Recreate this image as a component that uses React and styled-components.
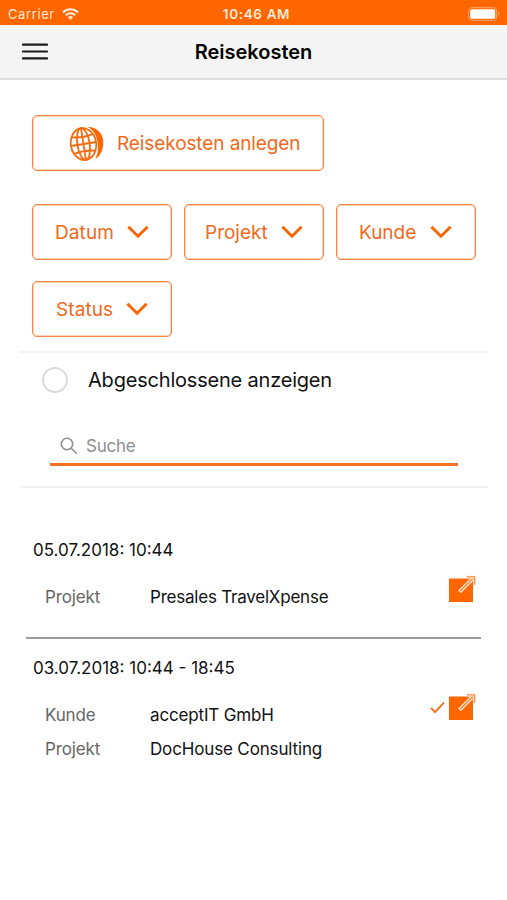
import React from "react";
import styled, { createGlobalStyle } from "styled-components";

const GlobalStyle = createGlobalStyle`
  * {
    box-sizing: border-box;
  }

  body {
    margin: 0;
    background: #fff;
    font-family: Inter, "Liberation Sans", sans-serif;
  }
`;

const Page = styled.div`
  width: 507px;
  height: 900px;
  overflow: hidden;
  background: #fff;
  color: #111;
`;

const StatusBar = styled.div`
  height: 25px;
  padding: 2px 7px 0 8px;
  display: grid;
  grid-template-columns: 1fr auto 1fr;
  align-items: center;
  background: #ff6600;
  color: #ffeadb;
  font-size: 13px;
`;

const Carrier = styled.div`
  display: flex;
  align-items: center;
  gap: 7px;
  letter-spacing: 0.6px;
`;

const Clock = styled.div`
  padding-left: 5px;
  font-size: 13.5px;
  font-weight: 600;
  letter-spacing: 0.65px;
`;

const Battery = styled.svg`
  justify-self: end;
`;

const Header = styled.header`
  height: 55px;
  padding: 0 22px;
  display: grid;
  grid-template-columns: 1fr auto 1fr;
  align-items: center;
  background: #f4f4f4;
  border-bottom: 2px solid #dedede;
`;

const MenuButton = styled.button`
  width: 26px;
  height: 17px;
  padding: 0;
  border: 0;
  background: none;
  display: flex;
`;

const Title = styled.h1`
  margin: 0;
  font-size: 20px;
  font-weight: 600;
  line-height: 24px;
  color: #000;
`;

const Actions = styled.div`
  padding: 35px 31px 0 32px;
`;

const OutlineButton = styled.button`
  width: ${({ $wide }) => ($wide ? "292px" : "140px")};
  height: 56px;
  padding: 1px 0 0 ${({ $indent }) => $indent}px;
  border: 1px solid #f58645;
  border-radius: 5px;
  box-shadow: inset 0 0 0 1px #fcd3b8;
  background: #fff;
  color: #f2691a;
  font-family: inherit;
  font-size: 19px;
  letter-spacing: ${({ $spacing }) => $spacing || 0}px;
  text-align: left;
  display: flex;
  align-items: center;
  gap: ${({ $gap }) => $gap}px;
`;

const Filters = styled.div`
  margin-top: 33px;
  display: flex;
  flex-wrap: wrap;
  gap: 21px 12px;
`;

const SearchPanel = styled.section`
  height: 137px;
  margin: 14px 19px 0 20px;
  border-top: 2px solid #f3f3f3;
  border-bottom: 2px solid #f3f3f3;
`;

const Toggle = styled.label`
  height: 53px;
  padding-left: 22px;
  display: flex;
  align-items: center;
  gap: 20px;
  font-size: 20px;
  letter-spacing: -0.2px;
`;

const Circle = styled.span`
  width: 26px;
  height: 26px;
  border: 2px solid #dadada;
  border-radius: 50%;
`;

const SearchField = styled.div`
  height: 41px;
  margin: 19px 30px 0;
  padding: 4px 0 0 10px;
  border-bottom: 3px solid #f47321;
  display: flex;
  align-items: center;
  gap: 8px;
  color: #8e8e8e;
  font-size: 17px;
  letter-spacing: -0.25px;
`;

const Entry = styled.article`
  height: ${({ $height }) => $height}px;
  margin: 0 26px;
  padding: ${({ $top }) => $top}px 5px 0 7px;
  border-bottom: ${({ $line }) => ($line ? "2px solid #9b9b9b" : "0")};
`;

const EntryDate = styled.div`
  font-size: 17px;
  line-height: 22px;
`;

const EntryBody = styled.div`
  margin-top: ${({ $gap }) => $gap}px;
  padding-left: 12px;
  display: flex;
  justify-content: space-between;
`;

const Fields = styled.dl`
  margin: 0;
  display: grid;
  grid-template-columns: 105px auto;
  grid-auto-rows: 34px;
  align-items: center;
  font-size: 17px;
`;

const Label = styled.dt`
  color: #666;
  letter-spacing: -0.15px;
`;

const Value = styled.dd`
  margin: 0;
  letter-spacing: ${({ $spacing }) => $spacing || -0.15}px;
`;

const EntryIcons = styled.div`
  height: 28px;
  margin-top: -5px;
  display: flex;
  align-items: center;
  gap: 3px;
`;

const Wifi = () => (
  <svg width="17" height="12" viewBox="0 0 17 12" fill="none" stroke="#ffeadb" strokeWidth="2.1">
    <path d="M1 4.4a10.6 10.6 0 0 1 15 0" />
    <path d="M3.8 7.2a6.7 6.7 0 0 1 9.4 0" />
    <path d="M8.5 12 5.9 9.3a3.8 3.8 0 0 1 5.2 0Z" fill="#ffeadb" stroke="none" />
  </svg>
);

const Globe = () => (
  <svg width="35" height="36" viewBox="0 0 35 36" fill="none" stroke="#f76b10" strokeWidth="1.8">
    <g transform="rotate(-9 14.5 18)">
      <ellipse cx="14.5" cy="18" rx="12.7" ry="16" />
      <ellipse cx="14.5" cy="18" rx="6.2" ry="16" />
      <path d="M14.5 2v32M1.8 18h25.4M4 9.6q10.5 2.6 21 0M4 26.4q10.5-2.6 21 0" />
    </g>
    <path d="M18.5 0.8C30 1.2 35 9.5 34.2 18.5C33.7 25 31 30.2 26.6 32.8C31.5 23 29.5 6.5 18.5 0.8Z" fill="#ff6600" stroke="none" />
  </svg>
);

const Chevron = () => (
  <svg width="22" height="16" viewBox="0 0 22 16" fill="none" stroke="#f86605" strokeWidth="3">
    <path d="m1.4 1.7 9.6 9.5 9.6-9.5" />
  </svg>
);

const SearchIcon = () => (
  <svg width="18" height="18" viewBox="0 0 18 18" fill="none" stroke="#8e8e8e" strokeWidth="1.6">
    <circle cx="7" cy="7" r="5.7" />
    <path d="m11.2 11.2 5.5 5.5" />
  </svg>
);

const Check = () => (
  <svg width="15" height="13" viewBox="0 0 15 13" fill="none" stroke="#f86b17" strokeWidth="1.8">
    <path d="m1 6.8 4 4.3L14 1.6" />
  </svg>
);

const OpenIcon = () => (
  <svg width="28" height="28" viewBox="0 0 28 28" fill="none">
    <path d="M1 3.5h24V27H1Z" fill="#ff6600" />
    <path d="m11.5 16.8 12.5-12.5" stroke="#ffe0c8" strokeWidth="4" />
    <path d="m12.3 16 11.5-11.5" stroke="#f98d46" strokeWidth="1.3" />
    <path d="M18.8 2.2h7.5v7.5" stroke="#ffd9bd" strokeWidth="2.8" />
    <path d="M18.8 1.8h7.9v7.9" stroke="#f6853f" strokeWidth="1" />
  </svg>
);

const filters = [
  { name: "Datum", indent: 22, gap: 13, spacing: 0.1 },
  { name: "Projekt", indent: 20, gap: 13, spacing: 0 },
  { name: "Kunde", indent: 22, gap: 14, spacing: 0 },
  { name: "Status", indent: 23, gap: 13, spacing: 0.1 },
];

export default function App() {
  return (
    <Page>
      <GlobalStyle />
      <StatusBar>
        <Carrier>
          Carrier
          <Wifi />
        </Carrier>
        <Clock>10:46 AM</Clock>
        <Battery width="32" height="14" viewBox="0 0 32 14">
          <rect x="0.7" y="0.7" width="28" height="12.6" rx="3" fill="none" stroke="#ffa96f" />
          <rect x="2.2" y="2.2" width="25" height="9.6" rx="1.5" fill="#fff" />
          <path d="M30.2 5c1.4.5 1.4 3.5 0 4Z" fill="#ffa96f" />
        </Battery>
      </StatusBar>

      <Header>
        <MenuButton aria-label="Menu">
          <svg width="26" height="17" viewBox="0 0 26 17" stroke="#1c1c1c" strokeWidth="2.2" strokeLinecap="round">
            <path d="M1 1.6h24M1 8.5h24M1 15.4h24" />
          </svg>
        </MenuButton>
        <Title>Reisekosten</Title>
      </Header>

      <Actions>
        <OutlineButton $wide $indent={36} $gap={13} $spacing={-0.1}>
          <Globe />
          Reisekosten anlegen
        </OutlineButton>
        <Filters>
          {filters.map((filter) => (
            <OutlineButton
              key={filter.name}
              $indent={filter.indent}
              $gap={filter.gap}
              $spacing={filter.spacing}
            >
              {filter.name}
              <Chevron />
            </OutlineButton>
          ))}
        </Filters>
      </Actions>

      <SearchPanel>
        <Toggle>
          <Circle />
          Abgeschlossene anzeigen
        </Toggle>
        <SearchField>
          <SearchIcon />
          Suche
        </SearchField>
      </SearchPanel>

      <Entry $height={151} $top={51} $line>
        <EntryDate>05.07.2018: 10:44</EntryDate>
        <EntryBody $gap={19}>
          <Fields>
            <Label>Projekt</Label>
            <Value $spacing={-0.22}>Presales TravelXpense</Value>
          </Fields>
          <EntryIcons>
            <OpenIcon />
          </EntryIcons>
        </EntryBody>
      </Entry>

      <Entry $height={150} $top={18}>
        <EntryDate>03.07.2018: 10:44 - 18:45</EntryDate>
        <EntryBody $gap={19}>
          <Fields>
            <Label>Kunde</Label>
            <Value>acceptIT GmbH</Value>
            <Label>Projekt</Label>
            <Value>DocHouse Consulting</Value>
          </Fields>
          <EntryIcons>
            <Check />
            <OpenIcon />
          </EntryIcons>
        </EntryBody>
      </Entry>
    </Page>
  );
}
